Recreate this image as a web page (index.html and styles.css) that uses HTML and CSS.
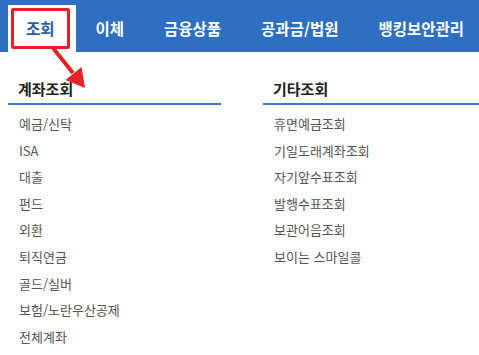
FILE: index.html
```html
<!DOCTYPE html>
<html lang="ko">
<head>
  <meta charset="UTF-8">
  <meta name="viewport" content="width=device-width, initial-scale=1.0">
  <title>조회 메뉴</title>
  <link rel="stylesheet" href="styles.css">
</head>
<body>

  <nav class="gnb">
    <a class="gnb-item active" href="#">조회<span class="mark"></span></a>
    <a class="gnb-item" href="#">이체</a>
    <a class="gnb-item" href="#">금융상품</a>
    <a class="gnb-item" href="#">공과금/법원</a>
    <a class="gnb-item" href="#">뱅킹보안관리</a>
  </nav>

  <svg class="arrow" width="100" height="100" viewBox="0 0 100 100">
    <line x1="53" y1="48" x2="73" y2="73" stroke="#e5222a" stroke-width="4"/>
    <polygon points="85,88 65.5,80 81.5,67" fill="#e5222a"/>
  </svg>

  <section class="submenu">
    <div class="col col-left">
      <h2 class="col-title">계좌조회</h2>
      <ul class="links">
        <li>예금/신탁</li>
        <li>ISA</li>
        <li>대출</li>
        <li>펀드</li>
        <li>외환</li>
        <li>퇴직연금</li>
        <li>골드/실버</li>
        <li>보험/노란우산공제</li>
        <li>전체계좌</li>
      </ul>
    </div>
    <div class="col col-right">
      <h2 class="col-title">기타조회</h2>
      <ul class="links">
        <li>휴면예금조회</li>
        <li>기일도래계좌조회</li>
        <li>자기앞수표조회</li>
        <li>발행수표조회</li>
        <li>보관어음조회</li>
        <li>보이는 스마일콜</li>
      </ul>
    </div>
  </section>

</body>
</html>
```

FILE: styles.css
```css
body {
  margin: 0;
  background: #fff;
  font-family: "Noto Sans CJK KR", "Noto Sans", sans-serif;
  position: relative;
}

.gnb {
  display: flex;
  height: 52px;
  padding-left: 8px;
  background-color: #2e6fc1;
  overflow: hidden;
}

.gnb-item {
  display: flex;
  flex-shrink: 0;
  align-items: center;
  padding: 0 20px 2px;
  margin-top: 5px;
  color: #fff;
  font-size: 15.5px;
  font-weight: bold;
  white-space: nowrap;
  text-decoration: none;
  position: relative;
}

.gnb-item.active {
  background: #fff;
  color: #2b5ea6;
  padding: 0 21px 2px 18px;
}

.gnb-item .mark {
  position: absolute;
  left: 3px;
  top: 3px;
  width: 53px;
  height: 35px;
  border: 3.5px solid #e5222a;
  border-radius: 2px;
}

.arrow {
  position: absolute;
  left: 0;
  top: 0;
}

.submenu {
  display: flex;
  gap: 42px;
  padding: 27px 0 0 8px;
}

.col-left {
  width: 213px;
}

.col-right {
  flex: 1;
}

.col-title {
  margin: 0;
  padding: 0 10px 4px;
  font-size: 15px;
  line-height: 20px;
  font-weight: bold;
  color: #222;
  border-bottom: 2px solid #3a78cc;
}

.links {
  list-style: none;
  margin: 6px 0 0;
  padding: 0 0 0 11px;
}

.links li {
  font-size: 13px;
  line-height: 26.6px;
  color: #555;
}
```
